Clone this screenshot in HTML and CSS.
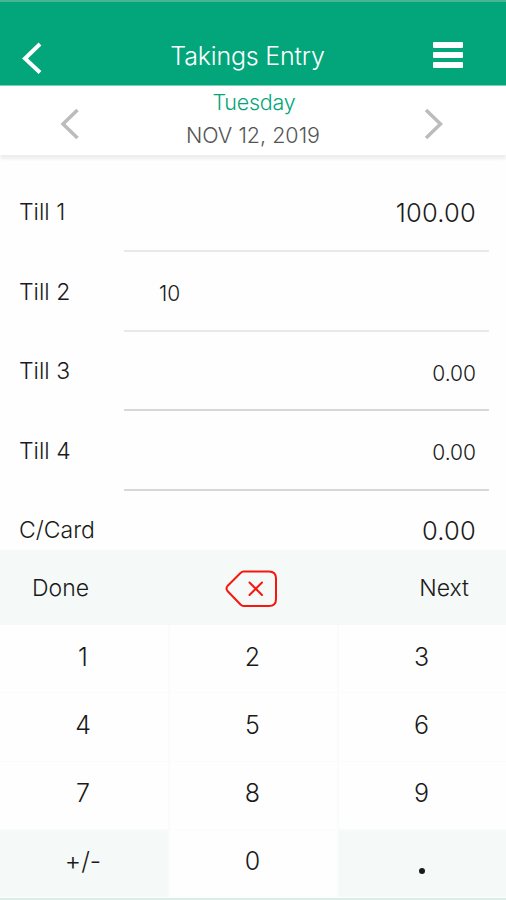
FILE: index.html
```html
<!DOCTYPE html>
<html lang="en">
<head>
    <meta charset="UTF-8">
    <meta name="viewport" content="width=device-width, initial-scale=1.0">
    <title>Takings Entry</title>
    <link rel="stylesheet" href="styles.css">
</head>
<body>

<div class="header">
    <svg class="back" width="22" height="34" viewBox="0 0 22 34"><path d="M20 3 L5 17.500 L20 31.500"/></svg>
    <h1>Takings Entry</h1>
    <div class="menu"><span></span><span></span><span></span></div>
</div>

<div class="datebar">
    <svg class="arrow" width="22" height="34" viewBox="0 0 22 34"><path d="M19.500 3 L5 17 L19.500 31"/></svg>
    <div class="date">
        <div class="day">Tuesday</div>
        <div class="full">NOV 12, 2019</div>
    </div>
    <svg class="arrow" width="22" height="34" viewBox="0 0 22 34"><path d="M3 3 L17.500 17 L3 31"/></svg>
</div>

<div class="tills">
    <div class="row"><label>Till 1</label><div class="value faint big">100.00</div></div>
    <div class="row"><label>Till 2</label><div class="value faint editing">10</div></div>
    <div class="row"><label>Till 3</label><div class="value">0.00</div></div>
    <div class="row"><label>Till 4</label><div class="value">0.00</div></div>
    <div class="row"><label>C/Card</label><div class="value big">0.00</div></div>
</div>

<div class="keypad">
    <div class="toolbar">
        <div class="done">Done</div>
        <svg class="delete" width="54" height="40" viewBox="0 0 54 40">
            <path d="M18.500 2.500 H44 Q51 2.500 51 9.500 V30 Q51 37 44 37 H18.500 Q17 37 15.500 35.500 L2.500 22 Q0.500 19.500 2.500 17 L15.500 4 Q17 2.500 18.500 2.500 Z"/>
            <path d="M24.500 13.500 L37 26 M37 13.500 L24.500 26"/>
        </svg>
        <div class="next">Next</div>
    </div>
    <div class="keys">
        <div class="key">1</div>
        <div class="key">2</div>
        <div class="key">3</div>
        <div class="key">4</div>
        <div class="key">5</div>
        <div class="key">6</div>
        <div class="key">7</div>
        <div class="key">8</div>
        <div class="key">9</div>
        <div class="key shaded">+/-</div>
        <div class="key">0</div>
        <div class="key shaded"><span class="dot"></span></div>
    </div>
</div>

</body>
</html>
```
FILE: styles.css
```css
* {
    box-sizing: border-box;
}
body {
    margin: 0;
    height: 900px;
    overflow: hidden;
    display: flex;
    flex-direction: column;
    font-family: Inter, "Liberation Sans", sans-serif;
    font-size: 23px;
    color: #1a1a1a;
    background: #fefefe;
}
svg {
    display: block;
    fill: none;
}
.header {
    height: 86px;
    padding: 27px 43px 0 20px;
    border-top: 2px solid #45b592;
    border-bottom: 1px solid #7fcfb5;
    background: #02a67a;
    display: flex;
    justify-content: space-between;
}
.back {
    margin-top: 12px;
    stroke: #fff;
    stroke-width: 4;
}
.header h1 {
    margin: 10px 0 0 20px;
    font-size: 25px;
    line-height: 34px;
    font-weight: 300;
    letter-spacing: -0.2px;
    color: #fff;
}
.menu {
    width: 30px;
    padding-top: 13px;
    display: flex;
    flex-direction: column;
    gap: 4px;
}
.menu span {
    height: 6px;
    border-radius: 1px;
    background: #fff;
}
.datebar {
    height: 69px;
    padding: 0 61px 0 58px;
    display: flex;
    justify-content: space-between;
    background: #fff;
    box-shadow: 0 4px 3px #eee;
}
.arrow {
    margin-top: 21px;
    stroke: #bcbcbc;
    stroke-width: 3.5;
}
.date {
    margin-left: 3px;
    text-align: center;
    font-weight: 300;
}
.day {
    margin-left: 2px;
    font-size: 21.5px;
    line-height: 32px;
    letter-spacing: -0.25px;
    color: #02a67a;
}
.full {
    padding-top: 1px;
    font-size: 21.5px;
    line-height: 32px;
    color: #555;
}
.tills {
    height: 395px;
    padding: 17.5px 17px 0 19px;
    overflow: hidden;
}
.row {
    height: 79.5px;
    display: flex;
}
.row label {
    width: 105px;
    padding-top: 24.5px;
    line-height: 30px;
    font-weight: 350;
}
.value {
    flex: 1;
    padding: 27px 13px 0 35px;
    border-bottom: 2px solid #d8d8d8;
    font-size: 21px;
    line-height: 30px;
    font-weight: 350;
    text-align: right;
}
.faint {
    border-color: #e9e9e9;
}
.big {
    padding-top: 25px;
    font-size: 25.5px;
    letter-spacing: 0.2px;
}
.editing {
    text-align: left;
}
.keypad {
    height: 350px;
    border-bottom: 2px solid #d9ece5;
}
.toolbar {
    height: 75px;
    padding: 0 37px 0 32px;
    display: flex;
    align-items: center;
    justify-content: space-between;
    font-weight: 350;
    background: #f5f9f8;
}
.delete {
    margin: 2px 5px 0 0;
    stroke: #f5180f;
    stroke-width: 2;
    stroke-linecap: round;
}
.keys {
    height: 272px;
    display: grid;
    grid-template-columns: 168px 167px 167px;
    grid-template-rows: repeat(4, 1fr);
    gap: 1px 2px;
    background: #fafcfb;
}
.key {
    padding: 0 2px 4px 0;
    display: flex;
    align-items: center;
    justify-content: center;
    font-size: 25px;
    font-weight: 350;
    background: #fefefe;
}
.shaded {
    background: #f5f9f8;
}
.dot {
    width: 6px;
    height: 6px;
    margin-top: 20px;
    border-radius: 50%;
    background: #1a1a1a;
}
```
